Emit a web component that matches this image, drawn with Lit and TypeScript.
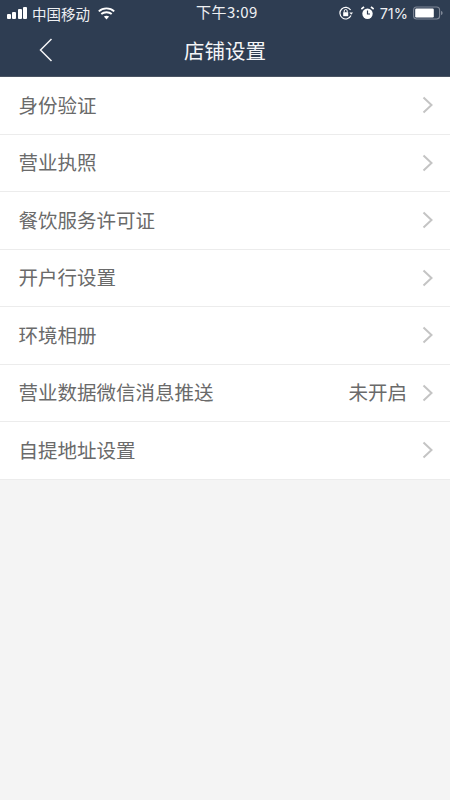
import { LitElement, html, css, svg } from "lit";
import { customElement } from "lit/decorators.js";

const rows: { label: string; value?: string }[] = [
  { label: "身份验证" },
  { label: "营业执照" },
  { label: "餐饮服务许可证" },
  { label: "开户行设置" },
  { label: "环境相册" },
  { label: "营业数据微信消息推送", value: "未开启" },
  { label: "自提地址设置" },
];

const chevron = svg`<path d="M1.5 1.5 L9.5 9 L1.5 16.5" fill="none" stroke="#c4c4c4" stroke-width="2"/>`;

@customElement("app-root")
export class AppRoot extends LitElement {
  static styles = css`
    :host {
      display: block;
      width: 450px;
      height: 800px;
      background: #f4f4f4;
      font-family: "Noto Sans CJK SC", "Noto Sans", sans-serif;
      overflow: hidden;
    }
    .header {
      height: 77px;
      background: #2e3d52;
      color: #fff;
      display: flex;
      flex-direction: column;
      box-sizing: border-box;
      border-bottom: 1px solid #4a5463;
    }
    .status {
      height: 26px;
      display: flex;
      align-items: center;
      justify-content: space-between;
      padding: 0 7px 0 7px;
      font-family: "Inter", "Noto Sans CJK SC", sans-serif;
      font-size: 15px;
      color: #eef0f3;
      position: relative;
    }
    .status .left, .status .right {
      display: flex;
      align-items: center;
    }
    .signal {
      display: flex;
      align-items: flex-end;
      gap: 1.3px;
      height: 12px;
      margin-right: 5px;
    }
    .signal i {
      width: 4px;
      background: #fff;
      border-radius: 1px;
      display: block;
    }
    .signal .s1 { height: 5px; }
    .signal .s2 { height: 7px; }
    .signal .s3 { height: 10px; }
    .signal .s4 { height: 12px; }
    .carrier { font-size: 14.5px; font-family: "Noto Sans CJK SC", sans-serif; }
    .wifi { margin-left: 8px; }
    .time {
      position: absolute;
      left: 196px;
      top: 2px;
      line-height: 20px;
      font-size: 15px;
      font-family: "Noto Sans CJK SC", sans-serif;
      letter-spacing: 0.45px;
    }
    .lock { margin-right: 8px; }
    .alarm { margin-right: 6px; }
    .pct { margin-right: 5px; font-size: 14.5px; }
    .nav {
      flex: 1;
      display: flex;
      align-items: center;
      justify-content: center;
      position: relative;
      padding-bottom: 3px;
    }
    .back {
      position: absolute;
      left: 39px;
      top: 12px;
    }
    .title {
      font-size: 20.5px;
      line-height: 28px;
      color: #f4f5f7;
    }
    .list { background: #fff; }
    .row {
      height: 57.5px;
      box-sizing: border-box;
      border-bottom: 1px solid #ececec;
      display: flex;
      align-items: center;
      padding: 0 17px 0 18.5px;
      color: #6a6a6a;
      font-size: 19.5px;
    }
    .label { flex: 1; padding-bottom: 2px; }
    .value { margin-right: 15px; padding-bottom: 2px; }
    .chev { display: block; }
  `;

  render() {
    return html`
      <div class="header">
        <div class="status">
          <div class="left">
            <div class="signal">
              <i class="s1"></i><i class="s2"></i><i class="s3"></i><i class="s4"></i>
            </div>
            <span class="carrier">中国移动</span>
            <svg class="wifi" width="17" height="13" viewBox="0 0 17 13">
              <path d="M0.8 4.4 C5 0.4 12 0.4 16.2 4.4" fill="none" stroke="#fff" stroke-width="1.9"/>
              <path d="M3.3 7 C6 4.6 11 4.6 13.7 7" fill="none" stroke="#fff" stroke-width="1.9"/>
              <path d="M5.9 9.6 L8.5 12.4 L11.1 9.6 C9.6 8.3 7.4 8.3 5.9 9.6 Z" fill="#fff"/>
            </svg>
          </div>
          <span class="time">下午3:09</span>
          <div class="right">
            <svg class="lock" width="14" height="14" viewBox="0 0 14 14">
              <path d="M11.6 4 A5.8 5.8 0 1 0 12 9.6" fill="none" stroke="#fff" stroke-width="1.2"/>
              <path d="M10.4 6.4 L14 6.4 L12.2 8.8 Z" fill="#fff"/>
              <rect x="4.2" y="6.2" width="5" height="4" fill="#fff"/>
              <path d="M5.2 6.2 V5 A1.5 1.5 0 0 1 8.2 5 V6.2" fill="none" stroke="#fff" stroke-width="1"/>
            </svg>
            <svg class="alarm" width="13" height="14" viewBox="0 0 13 14">
              <circle cx="6.5" cy="7.8" r="5.2" fill="#fff"/>
              <path d="M6.5 4.5 V8 H9" fill="none" stroke="#2e3d52" stroke-width="1.2"/>
              <path d="M0.3 3.2 L3 0.8 M12.7 3.2 L10 0.8" stroke="#fff" stroke-width="1.8"/>
            </svg>
            <span class="pct">71%</span>
            <svg width="30" height="14" viewBox="0 0 30 14">
              <rect x="0.6" y="1" width="26" height="12" rx="3" fill="none" stroke="#7f8897" stroke-width="1.1"/>
              <rect x="2.2" y="2.6" width="18.6" height="8.8" rx="1.2" fill="#fff"/>
              <path d="M28 5 C29.2 5.4 29.6 6 29.6 7 C29.6 8 29.2 8.6 28 9 Z" fill="#7f8897"/>
            </svg>
          </div>
        </div>
        <div class="nav">
          <svg class="back" width="14" height="24" viewBox="0 0 14 24">
            <path d="M12.5 1 L1.5 12 L12.5 23" fill="none" stroke="#f4f5f7" stroke-width="1.5"/>
          </svg>
          <span class="title">店铺设置</span>
        </div>
      </div>
      <div class="list">
        ${rows.map(
          (r) => html`<div class="row">
            <span class="label">${r.label}</span>
            ${r.value ? html`<span class="value">${r.value}</span>` : ""}
            <svg class="chev" width="11" height="18" viewBox="0 0 11 18">${chevron}</svg>
          </div>`
        )}
      </div>
    `;
  }
}
